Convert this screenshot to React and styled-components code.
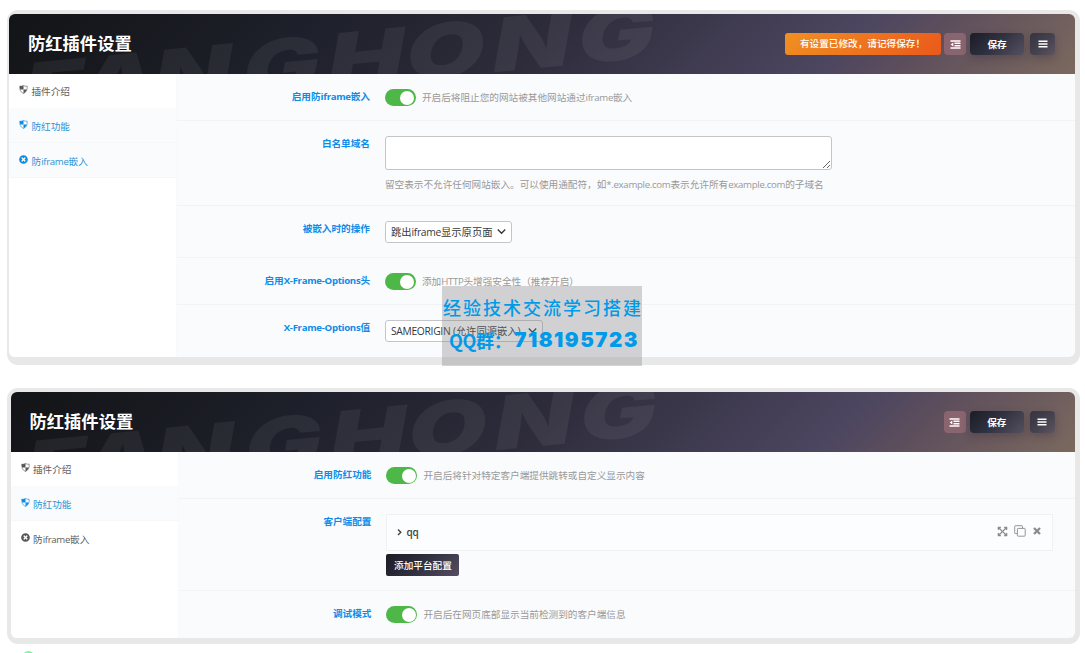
import React, { useState } from "react";
import styled, { createGlobalStyle, css } from "styled-components";
import { FaExpandArrowsAlt, FaTimesCircle } from "react-icons/fa";

const GlobalStyle = createGlobalStyle`
  * {
    box-sizing: border-box;
  }
  body {
    margin: 0;
    overflow: hidden;
    background: #fff;
    font-family: "Open Sans", "Noto Sans CJK SC", sans-serif;
    font-size: 9.65px;
    line-height: 15px;
    color: #555;
  }
  button, select, textarea {
    font-family: inherit;
  }
`;

const Page = styled.main`
  position: relative;
  height: 653px;
  padding: 10px 5px 0 7px;
  overflow: hidden;
`;

const Frame = styled.section`
  height: ${(p) => p.$height}px;
  margin-bottom: 23px;
  padding: ${(p) => p.$pad};
  border-radius: 11px;
  background: #e8e8e8;
`;

const Panel = styled.div`
  height: 100%;
  border-radius: 6px;
  overflow: hidden;
  background: #fafbfd;
`;

const Header = styled.header`
  position: relative;
  display: flex;
  align-items: center;
  height: 60px;
  padding: 0 20px 0 19px;
  background: linear-gradient(
    135deg,
    #131416 0%,
    #1e202b 28%,
    #2e2c3b 50%,
    #4c4660 77%,
    #5d4e5c 84%,
    #7b695f 100%
  );
`;

const Backdrop = styled.svg`
  position: absolute;
  top: 0;
  left: 0;
  width: 700px;
  height: 60px;

  text {
    font-family: Inter, sans-serif;
    font-weight: 900;
    font-style: italic;
    font-size: 74px;
    fill: rgba(255, 255, 255, 0.06);
  }
`;

const Title = styled.h1`
  position: relative;
  margin: 0 auto 0 0;
  font-size: 17.3px;
  line-height: 24px;
  font-weight: 700;
  color: #fff;
`;

const Notice = styled.div`
  width: 156px;
  height: 22px;
  margin-right: 3px;
  padding-left: 15px;
  border-radius: 3px;
  background: linear-gradient(135deg, #f09022, #ea591b);
  color: #fff;
  font-weight: 500;
  line-height: 22px;
  white-space: nowrap;
`;

const HeaderButton = styled.button`
  display: flex;
  align-items: center;
  justify-content: center;
  width: ${(p) => p.$width}px;
  height: 22px;
  margin: 0 0 0 ${(p) => p.$gap || 0}px;
  padding: 0;
  border: 0;
  border-radius: 4px;
  color: #fff;
  font-size: 9.65px;
  font-weight: 700;
  background: linear-gradient(
    135deg,
    ${(p) => (p.$light ? "#34343f, #45424f 55%, #5f545f" : "#1b1c25, #2e303f 45%, #55505f")}
  );
  box-shadow: 0 3px 8px rgba(30, 25, 40, 0.25);

  ${(p) =>
    p.$soft &&
    css`
      background: #8a6570;
      box-shadow: none;
    `}
`;

const Body = styled.div`
  display: flex;
  height: calc(100% - 60px);
`;

const Nav = styled.nav`
  flex: 0 0 168px;
  background: #fff;
  border-right: 1px solid #f8f9fb;
`;

const NavItem = styled.a`
  display: flex;
  height: ${(p) => p.$height || 35}px;
  padding: 10px 0 0 10px;
  border-bottom: 1px solid ${(p) => (p.$active ? "#f6f7f9" : "#fff")};
  background: ${(p) => (p.$active ? "#fafbfd" : "#fff")};
  color: ${(p) => (p.$active ? "#2b93d5" : "#606060")};

  svg {
    flex: none;
    width: 9px;
    height: 9px;
    margin: 1px 3.5px 0 0;
    color: ${(p) => (p.$active ? "#0b8ce4" : "#555")};
  }
  & + & {
    padding-top: 11px;
  }
`;

const Fields = styled.div`
  flex: 1;
`;

const Field = styled.div`
  display: flex;
  height: ${(p) => p.$height}px;
  padding-top: 15px;
  border-bottom: 1px solid #f2f3f5;

  &:last-child {
    border-bottom: 0;
  }
`;

const Label = styled.div`
  width: 193px;
  margin-right: 14.9px;
  text-align: right;
  font-weight: 700;
  color: #0f8be8;
`;

const Control = styled.div`
  flex: 1;
`;

const SwitchLine = styled.div`
  display: flex;
  align-items: center;
  height: 17px;
  color: #999;
`;

const Switch = styled.button`
  display: flex;
  justify-content: ${(p) => (p.$on ? "flex-end" : "flex-start")};
  width: 31px;
  height: 17px;
  margin: 0 6px 0 0;
  padding: 1.5px;
  border: 0;
  border-radius: 9px;
  background: ${(p) => (p.$on ? "#4db748" : "#ccc")};

  &::after {
    content: "";
    width: 14px;
    height: 14px;
    border-radius: 50%;
    background: #fff;
  }
`;

const TextArea = styled.textarea`
  display: block;
  width: 447px;
  height: 34px;
  margin: 0;
  border: 1px solid #c4c5c8;
  border-radius: 3px;
  background: #fff;
`;

const Hint = styled.p`
  margin: 7px 0 0;
  color: #999;
`;

const SelectBox = styled.button`
  display: flex;
  align-items: center;
  justify-content: space-between;
  width: ${(p) => p.$width}px;
  height: 22px;
  padding: 0 5px 1px;
  border: 1px solid #c4c5c8;
  border-radius: 3px;
  background: #fff;
  color: #333940;
  font-size: 10.3px;
  line-height: 14px;
  white-space: nowrap;
`;

const LatinRun = styled.span`
  letter-spacing: -0.3px;
`;

const Group = styled.div`
  display: flex;
  align-items: center;
  width: 667px;
  height: 37px;
  padding: 0 10px 0 9px;
  border: 1px solid #f0f1f3;
  background: #fcfdfe;
  color: #444;
`;

const GroupName = styled.span`
  margin: 0 auto 0 1px;
  font-size: 10px;
  font-weight: 600;
`;

const GroupTools = styled.div`
  display: flex;
  align-items: center;
  gap: 6px;
  margin-bottom: 3px;
  color: #8b8b8b;
`;

const AddButton = styled.button`
  display: block;
  width: 73px;
  height: 22px;
  margin-top: 3px;
  padding: 0;
  border: 0;
  border-radius: 2px;
  background: linear-gradient(135deg, #1b1c25, #2e2e3d 45%, #554d62);
  color: #fff;
  font-size: 9.65px;
  font-weight: 500;
`;

const Stamp = styled.aside`
  position: absolute;
  top: 286px;
  left: 442px;
  width: 200px;
  height: 80px;
  padding: 9px 0 0 1px;
  background: rgba(128, 128, 128, 0.34);
  color: #009ae9;
  white-space: nowrap;
`;

const StampLine = styled.div`
  font-family: "Noto Sans CJK SC", sans-serif;
  font-size: 18px;
  font-weight: 500;
  letter-spacing: 2px;
  line-height: 24px;
`;

const StampContact = styled.div`
  display: flex;
  align-items: center;
  margin: 7px 0 0 6px;
  font-family: "Noto Sans CJK SC", sans-serif;
  font-size: 18px;
  font-weight: 700;
  line-height: 26px;
  letter-spacing: -0.3px;
`;

const StampNumber = styled.span`
  margin: 1px 0 0 auto;
  padding-right: 3px;
  font-family: Inter, sans-serif;
  font-size: 20.5px;
  font-weight: 900;
  letter-spacing: 1.5px;
`;

const Dot = styled.i`
  position: absolute;
  top: 651px;
  left: 23px;
  width: 11px;
  height: 11px;
  border-radius: 50%;
  background: #74f7a4;
`;

// shield with two opposite quarters filled
const Shield = () => (
  <svg viewBox="0 0 9 9" fill="currentColor">
    <path
      d="M4.5.5C3.4 1.2 2.1 1.4.8 1.2C.5 4.6 1.6 7.2 4.5 8.5C7.4 7.2 8.5 4.6 8.2 1.2C6.9 1.4 5.6 1.2 4.5.5z"
      fill="none"
      stroke="currentColor"
      strokeWidth="0.8"
      opacity="0.75"
    />
    <path d="M4.5.6v4H1.3C.8 3.6.7 2.4.8 1.1C2.2 1.3 3.4 1.1 4.5.6zM4.5 4.6h3.3C7.2 6.4 6.2 7.7 4.5 8.5z" />
  </svg>
);

const Outdent = () => (
  <svg width="11" height="9" viewBox="0 0 11 9" fill="currentColor">
    <path d="M.5.3h10v1.5H.5zM4.5 2.6h6v1.5h-6zM4.5 4.9h6v1.5h-6zM.5 7.2h10v1.5H.5zM3.3 2.5v4L.7 4.5z" />
  </svg>
);

const Bars = () => (
  <svg width="10" height="8" viewBox="0 0 10 8" fill="currentColor">
    <path d="M.5.5h9V2h-9zM.5 3.3h9v1.4h-9zM.5 6h9v1.5h-9z" />
  </svg>
);

const Chevron = ({ right }) => (
  <svg width="9" height="9" viewBox="0 0 9 9" fill="none" stroke="currentColor" strokeWidth="1.4">
    <path d={right ? "M2 1.5l2.8 2.8L2 7.1" : "M.8 2.6l3.7 3.6 3.7-3.6"} />
  </svg>
);

const Copy = () => (
  <svg width="12" height="12" viewBox="0 0 12 12" fill="none" stroke="currentColor" strokeWidth="0.9">
    <rect x="3.4" y="3.4" width="7.8" height="7.8" rx="0.7" />
    <path d="M3.2 8.5H1.3a.6.6 0 0 1-.6-.6V1.3c0-.4.2-.6.6-.6h6.6c.4 0 .6.2.6.6v1.9" />
  </svg>
);

const Cross = () => (
  <svg width="10" height="10" viewBox="0 0 10 10" stroke="currentColor" strokeWidth="2.3">
    <path d="M2 2l6 6M8 2L2 8" />
  </svg>
);

// tightens the latin parts inside chinese copy
const Mixed = ({ children }) => (
  <span>
    {children
      .split(/([\x21-\x7e]+)/)
      .map((part, index) => (index % 2 ? <LatinRun key={index}>{part}</LatinRun> : part))}
  </span>
);

function Toggle({ text }) {
  const [on, setOn] = useState(true);
  return (
    <SwitchLine>
      <Switch $on={on} onClick={() => setOn(!on)} />
      <Mixed>{text}</Mixed>
    </SwitchLine>
  );
}

function SettingsHeader({ changed }) {
  return (
    <Header>
      <Backdrop>
        <g transform="translate(19 103) rotate(-5.5) skewX(-3) scale(1.38 1)">
          <text x="-3 36 92 157 219 276 339 401">FANGHONG</text>
        </g>
      </Backdrop>
      <Title>防红插件设置</Title>
      {changed && <Notice>有设置已修改，请记得保存！</Notice>}
      <HeaderButton $soft $width={22}>
        <Outdent />
      </HeaderButton>
      <HeaderButton $width={54} $gap={4}>
        保存
      </HeaderButton>
      <HeaderButton $light $width={25} $gap={6}>
        <Bars />
      </HeaderButton>
    </Header>
  );
}

const menu = [
  { text: "插件介绍", icon: Shield, height: 34 },
  { text: "防红功能", icon: Shield },
  { text: "防iframe嵌入", icon: FaTimesCircle },
];

function SideNav({ active }) {
  return (
    <Nav>
      {menu.map(({ text, icon: Icon, height }, index) => (
        <NavItem key={text} $height={height} $active={active.includes(index)}>
          <Icon />
          <Mixed>{text}</Mixed>
        </NavItem>
      ))}
    </Nav>
  );
}

function Row({ label, height, children }) {
  return (
    <Field $height={height}>
      <Label>
        <Mixed>{label}</Mixed>
      </Label>
      <Control>{children}</Control>
    </Field>
  );
}

function App() {
  return (
    <Page>
      <GlobalStyle />
      <Frame $height={355} $pad="4px 5px 8px 2px">
        <Panel>
          <SettingsHeader changed />
          <Body>
            <SideNav active={[1, 2]} />
            <Fields>
              <Row label="启用防iframe嵌入" height={47}>
                <Toggle text="开启后将阻止您的网站被其他网站通过iframe嵌入" />
              </Row>
              <Row label="白名单域名" height={85}>
                <TextArea />
                <Hint>
                  <Mixed>留空表示不允许任何网站嵌入。可以使用通配符，如*.example.com表示允许所有example.com的子域名</Mixed>
                </Hint>
              </Row>
              <Row label="被嵌入时的操作" height={52}>
                <SelectBox $width={127}>
                  <Mixed>跳出iframe显示原页面</Mixed>
                  <Chevron />
                </SelectBox>
              </Row>
              <Row label="启用X-Frame-Options头" height={47}>
                <Toggle text="添加HTTP头增强安全性（推荐开启）" />
              </Row>
              <Row label="X-Frame-Options值" height={52}>
                <SelectBox $width={158}>
                  <Mixed>SAMEORIGIN (允许同源嵌入)</Mixed>
                  <Chevron />
                </SelectBox>
              </Row>
            </Fields>
          </Body>
        </Panel>
      </Frame>
      <Frame $height={256} $pad="4px 5.2px 6px 3.5px">
        <Panel>
          <SettingsHeader />
          <Body>
            <SideNav active={[1]} />
            <Fields>
              <Row label="启用防红功能" height={47}>
                <Toggle text="开启后将针对特定客户端提供跳转或自定义显示内容" />
              </Row>
              <Row label="客户端配置" height={92}>
                <Group>
                  <Chevron right />
                  <GroupName>qq</GroupName>
                  <GroupTools>
                    <FaExpandArrowsAlt size={11} />
                    <Copy />
                    <Cross />
                  </GroupTools>
                </Group>
                <AddButton>添加平台配置</AddButton>
              </Row>
              <Row label="调试模式" height={47}>
                <Toggle text="开启后在网页底部显示当前检测到的客户端信息" />
              </Row>
            </Fields>
          </Body>
        </Panel>
      </Frame>
      <Stamp>
        <StampLine>经验技术交流学习搭建</StampLine>
        <StampContact>
          QQ群：
          <StampNumber>718195723</StampNumber>
        </StampContact>
      </Stamp>
      <Dot />
    </Page>
  );
}

export default App;
